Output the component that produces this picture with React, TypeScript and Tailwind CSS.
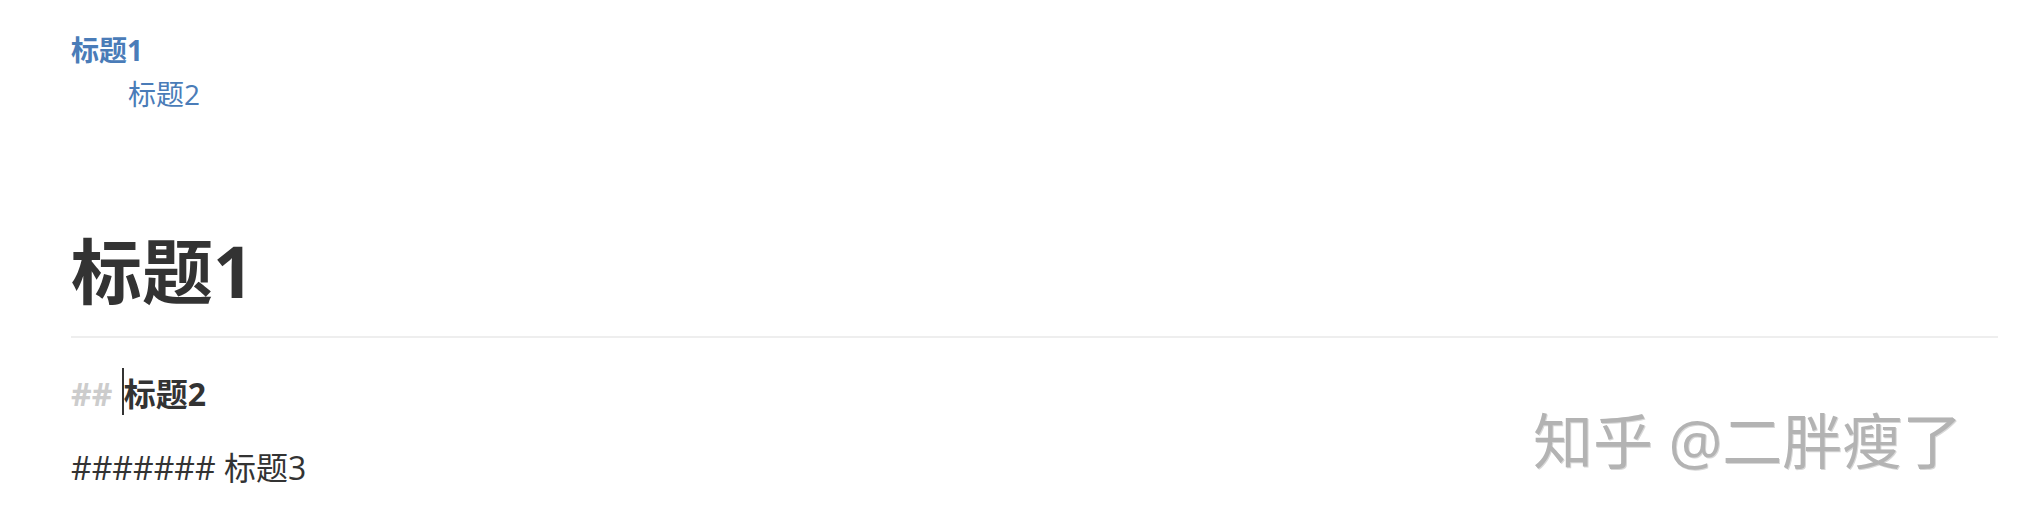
export default function App() {
  return (
    <div className="relative h-[526px] w-[2018px] overflow-hidden bg-white font-['Open_Sans','Noto_Sans_CJK_SC',sans-serif] text-[#333]">
      <div className="pl-[71px] pr-[20px] pt-[28px]">
        {/* toc */}
        <div className="text-[28px] leading-[44px] text-[#4a7cb8]">
          <div className="font-bold">标题1</div>
          <div className="pl-[57px]">标题2</div>
        </div>

        <h1 className="mt-[110px] border-b-2 border-[#eeeeee] pb-[20px] text-[71px] font-bold leading-[90px]">
          标题1
        </h1>

        <h2 className="mt-[34px] text-[32px] font-bold leading-[44px]">
          <span className="mr-[3px] text-[#cccccc]">## </span>
          <span className="relative">
            <span className="absolute left-[-2px] top-[-4px] h-[47px] w-[2px] bg-[#333]" />
          </span>
          标题2
        </h2>

        <p className="mt-[30px] text-[32px] leading-[44px]">####### 标题3</p>
      </div>

      {/* watermark */}
      <div className="absolute left-[1533px] top-[398px] text-[60px] leading-[86px] text-[#b3b3b3] [text-shadow:1px_1px_0_#d8d8d8]">
        知乎 @二胖瘦了
      </div>
    </div>
  )
}
